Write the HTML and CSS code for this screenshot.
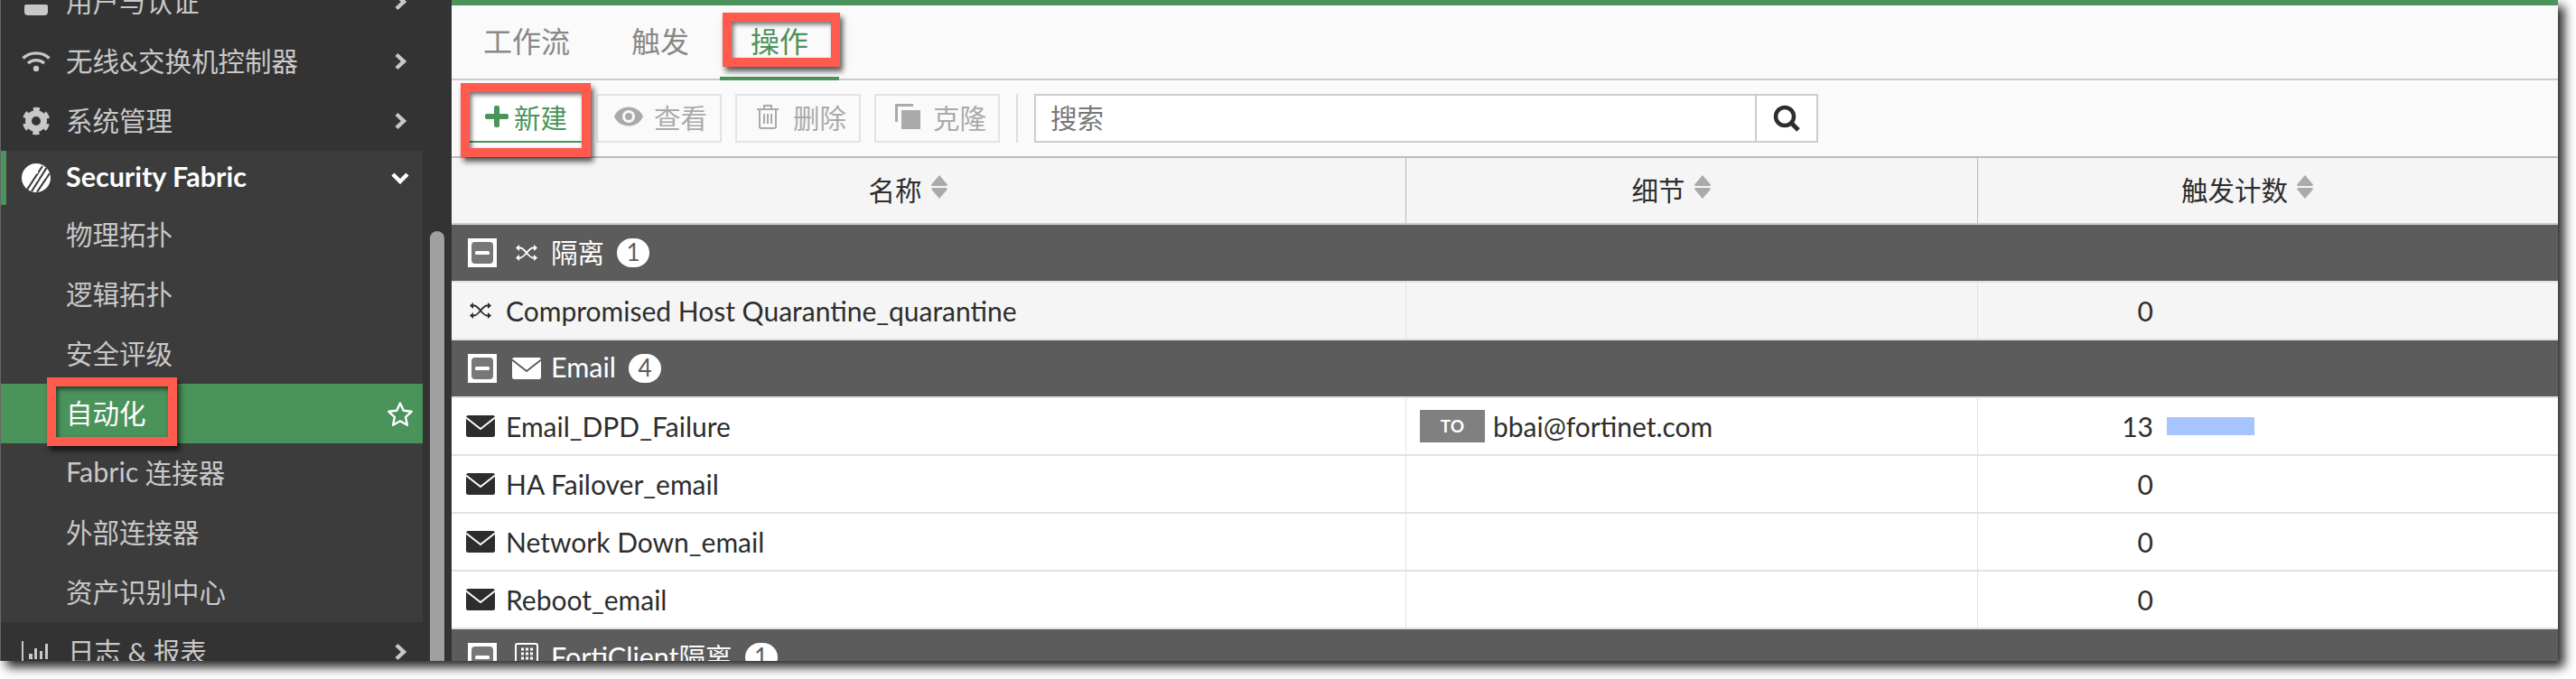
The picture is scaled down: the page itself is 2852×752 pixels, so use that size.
FILE: index.html
```html
<!DOCTYPE html>
<html lang="zh-CN">
	<head>
		<meta charset="UTF-8" />
		<title>Automation</title>
		<link rel="stylesheet" href="styles.css">
	</head>
	<body>
		<svg class="sprite">
			<symbol id="chev-right" viewBox="0 0 14 20"><path d="M3 2.500 11 10 3 17.500" fill="none" stroke="currentColor" stroke-width="4.400"/></symbol>
			<symbol id="mail" viewBox="0 0 32 24"><rect width="32" height="24" rx="2.500" fill="currentColor"/><path class="mail-v" d="M0 2.500 16 15 32 2.500" fill="none" stroke-width="1.800"/></symbol>
			<symbol id="shuffle" viewBox="0 0 24 18" fill="none" stroke="currentColor" stroke-width="1.800"><path d="M2 3.500H5C10 3.500 14 14.500 19 14.500H22M2 14.500H5C10 14.500 14 3.500 19 3.500H22"/><path d="M20 0 24 3.500 20 7ZM20 11 24 14.500 20 18ZM4 0 0 3.500 4 7ZM4 11 0 14.500 4 18Z" fill="currentColor" stroke="none"/></symbol>
			<symbol id="minus-box" viewBox="0 0 32 32"><rect width="32" height="32" fill="#fff"/><rect x="4" y="4" width="24" height="24" rx="4" fill="#777"/><rect x="8" y="14" width="16" height="4" rx="1.500" fill="#fff"/></symbol>
			<symbol id="sort" viewBox="0 0 18 26"><path d="M9 0 18 10.500Q18 12 16 12H2Q0 12 0 10.500ZM2 14H16Q18 14 18 15.500L9 26 0 15.500Q0 14 2 14Z" fill="currentColor"/></symbol>
		</svg>
		<div class="frame">
			<nav class="sidebar">
				<div class="menu">
					<div class="item">
						<svg class="item-icon" viewBox="0 0 32 32"><path d="M3 13V7Q3 5 5 5H27Q29 5 29 7V13Q29 17 25 17H7Q3 17 3 13Z" fill="currentColor" transform="translate(0 14)"/></svg>
						<span>用户与认证</span>
						<svg class="chev"><use href="#chev-right"/></svg>
					</div>
					<div class="item">
						<svg class="item-icon" viewBox="0 0 32 24" fill="none" stroke="currentColor" stroke-width="3.400"><path d="M1.500 8.500C9 1 23 1 30.500 8.500M7 14C12 9.500 20 9.500 25 14"/><circle cx="16" cy="20" r="3.200" fill="currentColor" stroke="none"/></svg>
						<span>无线&amp;交换机控制器</span>
						<svg class="chev"><use href="#chev-right"/></svg>
					</div>
					<div class="item">
						<svg class="item-icon" viewBox="0 0 32 32" fill="none" stroke="currentColor"><circle cx="16" cy="16" r="8.500" stroke-width="7"/><circle cx="16" cy="16" r="13" stroke-width="4.500" stroke-dasharray="7 6.610" stroke-dashoffset="-3.300"/></svg>
						<span>系统管理</span>
						<svg class="chev"><use href="#chev-right"/></svg>
					</div>
					<div class="section">
						<div class="item item-head">
							<svg class="item-icon" viewBox="0 0 32 32"><circle cx="16" cy="16" r="16" fill="#fff"/><path d="M23 3 6 29M27.500 5 11 31M31 11 17 31.500" fill="none" stroke="#3c3c3c" stroke-width="2.200"/><circle cx="17" cy="10" r="1.300" fill="#fff"/><circle cx="17" cy="18" r="1.300" fill="#fff"/><circle cx="26" cy="15" r="1.300" fill="#fff"/></svg>
							<span>Security Fabric</span>
							<svg class="chev-down" viewBox="0 0 20 14"><path d="M2 3 10 11 18 3" fill="none" stroke="currentColor" stroke-width="4.400"/></svg>
						</div>
						<div class="item">物理拓扑</div>
						<div class="item">逻辑拓扑</div>
						<div class="item">安全评级</div>
						<div class="item item-active">
							<span>自动化</span>
							<svg class="star" viewBox="0 0 30 29"><path d="M15 2.500 18.800 10.700 27.700 11.800 21.100 17.900 22.900 26.700 15 22.300 7.100 26.700 8.900 17.900 2.300 11.800 11.200 10.700Z" fill="none" stroke="currentColor" stroke-width="2.400" stroke-linejoin="round"/></svg>
						</div>
						<div class="item"><span class="latin">Fabric</span>&nbsp;连接器</div>
						<div class="item">外部连接器</div>
						<div class="item">资产识别中心</div>
					</div>
					<div class="item">
						<svg class="item-icon" viewBox="0 0 32 24" fill="currentColor"><path d="M0 0H2V22H32V24H0Z"/><rect x="8" y="14" width="4" height="6"/><rect x="14" y="8" width="3" height="12"/><rect x="20" y="11" width="3" height="9"/><rect x="26" y="3" width="3" height="17"/></svg>
						<span class="logs">日志 &amp; 报表</span>
						<svg class="chev"><use href="#chev-right"/></svg>
					</div>
				</div>
				<div class="scroll-thumb"></div>
			</nav>

			<main class="content">
				<div class="tabs">
					<div class="tab">工作流</div>
					<div class="tab">触发</div>
					<div class="tab tab-active">操作</div>
				</div>

				<div class="toolbar">
					<button class="btn btn-new">
						<svg class="btn-plus" viewBox="0 0 26 24"><path d="M10 2Q10 0 12 0H14Q16 0 16 2V9H24Q26 9 26 11V13Q26 15 24 15H16V22Q16 24 14 24H12Q10 24 10 22V15H2Q0 15 0 13V11Q0 9 2 9H10Z" fill="currentColor"/></svg>
						新建
					</button>
					<button class="btn">
						<svg class="btn-eye" viewBox="0 0 32 22"><path d="M0 11C6 -3 26 -3 32 11 26 25 6 25 0 11Z" fill="currentColor"/><circle cx="16" cy="11" r="7" fill="#fafafa"/><circle cx="16" cy="11" r="4" fill="currentColor"/></svg>
						查看
					</button>
					<button class="btn">
						<svg class="btn-trash" viewBox="0 0 24 28" fill="none" stroke="currentColor" stroke-width="2"><path d="M0 6H24M8 6V2H16V6M3 6V25Q3 27 5 27H19Q21 27 21 25V6M8 11V22M12 11V22M16 11V22"/></svg>
						删除
					</button>
					<button class="btn">
						<svg class="btn-clone" viewBox="0 0 28 28" fill="currentColor"><path d="M0 0H20V3H3V20H0Z"/><rect x="7" y="7" width="21" height="21"/></svg>
						克隆
					</button>
					<div class="tool-sep"></div>
					<div class="search">
						<div class="search-input">搜索</div>
						<div class="search-btn">
							<svg viewBox="0 0 30 30" fill="none" stroke="currentColor"><circle cx="13" cy="13" r="10" stroke-width="4.500"/><path d="M20 20 28 28" stroke-width="5"/></svg>
						</div>
					</div>
				</div>

				<div class="row head">
					<div class="cell">名称<svg class="sort"><use href="#sort"/></svg></div>
					<div class="cell">细节<svg class="sort"><use href="#sort"/></svg></div>
					<div class="cell">触发计数<svg class="sort"><use href="#sort"/></svg></div>
				</div>

				<div class="group">
					<svg class="toggle"><use href="#minus-box"/></svg>
					<span class="group-icon"><svg class="ico-shuffle"><use href="#shuffle"/></svg></span>
					<span class="group-name">隔离</span>
					<span class="badge">1</span>
				</div>
				<div class="row row-alt">
					<div class="cell name"><span class="name-icon"><svg class="ico-shuffle"><use href="#shuffle"/></svg></span>Compromised Host Quarantine_quarantine</div>
					<div class="cell"></div>
					<div class="cell count">0</div>
				</div>

				<div class="group">
					<svg class="toggle"><use href="#minus-box"/></svg>
					<span class="group-icon"><svg class="ico-mail"><use href="#mail"/></svg></span>
					<span class="group-name latin">Email</span>
					<span class="badge">4</span>
				</div>
				<div class="row">
					<div class="cell name"><span class="name-icon"><svg class="ico-mail"><use href="#mail"/></svg></span>Email_DPD_Failure</div>
					<div class="cell detail"><span class="to">TO</span>bbai@fortinet.com</div>
					<div class="cell count">13<span class="bar" style="width: 97px"></span></div>
				</div>
				<div class="row">
					<div class="cell name"><span class="name-icon"><svg class="ico-mail"><use href="#mail"/></svg></span>HA Failover_email</div>
					<div class="cell"></div>
					<div class="cell count">0</div>
				</div>
				<div class="row">
					<div class="cell name"><span class="name-icon"><svg class="ico-mail"><use href="#mail"/></svg></span>Network Down_email</div>
					<div class="cell"></div>
					<div class="cell count">0</div>
				</div>
				<div class="row">
					<div class="cell name"><span class="name-icon"><svg class="ico-mail"><use href="#mail"/></svg></span>Reboot_email</div>
					<div class="cell"></div>
					<div class="cell count">0</div>
				</div>

				<div class="group">
					<svg class="toggle"><use href="#minus-box"/></svg>
					<span class="group-icon">
						<svg class="ico-client" viewBox="0 0 28 32" fill="none" stroke="currentColor" stroke-width="2"><path d="M2 31V3Q2 1 4 1H24Q26 1 26 3V31Z"/><path d="M8 7H11M13 7H16M18 7H21M8 12H11M13 12H16M18 12H21M8 17H11M13 17H16M18 17H21" stroke-width="3"/></svg>
					</span>
					<span class="group-name"><span class="latin">FortiClient</span>隔离</span>
					<span class="badge">1</span>
				</div>
			</main>

			<div class="callout callout-menu"></div>
			<div class="callout callout-tab"></div>
			<div class="callout callout-new"></div>
		</div>
	</body>
</html>
```

FILE: styles.css
```css
* {
	box-sizing: border-box;
}
html, body {
	height: 100%;
}
body {
	margin: 0;
	background-color: #fff;
	overflow: hidden;
	font-family: Lato, "Noto Sans CJK SC", sans-serif;
	font-size: 29.5px;
	color: #2d2d2d;
}
button {
	font: inherit;
}
.sprite {
	display: none;
}
.latin {
	font-size: 30.5px;
}
.frame {
	position: relative;
	display: flex;
	width: 2832px;
	height: 732px;
	overflow: visible;
	box-shadow: 7px 7px 11px rgb(40, 40, 40);
}

/* sidebar */
.sidebar {
	position: relative;
	flex: 0 0 500px;
	height: 732px;
	overflow: hidden;
	background-color: #333;
	border-left: 1px solid #666;
	color: #c8c8c8;
}
.menu {
	width: 467px;
	margin-top: -31px;
}
.item {
	display: flex;
	align-items: center;
	height: 66px;
	padding: 0 0 5px 72px;
	position: relative;
}
.item > span {
	flex: 1;
}
.item > .latin {
	flex: none;
}
.item-icon {
	position: absolute;
	left: 23px;
	top: 17px;
	width: 32px;
	height: 32px;
}
.chev {
	width: 14px;
	height: 20px;
	margin: 5px 18px 0 0;
}
.section {
	background-color: #3c3c3c;
}
.item-head {
	height: 60px;
	color: #fff;
	font-size: 30.5px;
	font-weight: bold;
}
.item-head::before {
	content: "";
	position: absolute;
	left: -1px;
	top: 0;
	width: 7px;
	height: 60px;
	background-color: #4a935a;
}
.item-head .item-icon {
	top: 14px;
}
.chev-down {
	width: 20px;
	height: 14px;
	margin: 5px 15px 0 0;
}
.item-active {
	background-color: #4a935a;
	color: #fff;
}
.star {
	width: 30px;
	height: 29px;
	margin: 5px 10px 0 0;
}
.logs {
	padding-left: 2px;
}
.scroll-thumb {
	position: absolute;
	left: 475px;
	top: 256px;
	width: 16px;
	height: 480px;
	border-radius: 8px 8px 0 0;
	background-color: #a0a0a0;
}

/* content */
.content {
	flex: 1;
	height: 732px;
	overflow: hidden;
	background-color: #fafafa;
	border-top: 6px solid #4a935a;
}
.tabs {
	display: flex;
	height: 83px;
	padding-left: 1px;
	border-bottom: 2px solid #ccc;
	font-size: 32px;
	color: #888;
}
.tab {
	height: 83px;
	padding: 17px 34px 0;
	line-height: 46px;
}
.tab-active {
	color: #4a935a;
	border-bottom: 4px solid #4a935a;
}
.toolbar {
	display: flex;
	height: 86px;
	padding: 15px 0 0 16px;
	border-bottom: 2px solid #bbb;
	color: #aaa;
}
.btn {
	display: flex;
	align-items: center;
	gap: 12px;
	width: 139px;
	height: 54px;
	margin-right: 15px;
	padding: 0 0 4px 18px;
	background: none;
	border: 2px solid #e3e3e3;
	color: #aaa;
}
.btn-new {
	width: 129px;
	padding-left: 19px;
	gap: 6px;
	background-color: #fff;
	border-color: #fff;
	border-bottom-color: #4a935a;
	color: #4a935a;
}
.btn-plus {
	width: 26px;
	height: 24px;
}
.btn-eye {
	width: 32px;
	height: 22px;
}
.btn-trash {
	width: 24px;
	height: 28px;
	margin: 0 4px;
}
.btn-clone {
	width: 28px;
	height: 28px;
	margin-right: 2px;
	margin-left: 3px;
}
.tool-sep {
	width: 2px;
	height: 54px;
	margin: 0 18px 0 3px;
	background-color: #ddd;
}
.search {
	display: flex;
	width: 868px;
	height: 54px;
	background-color: #fff;
	border: 2px solid #ccc;
}
.search-input {
	flex: 1;
	padding-left: 16px;
	line-height: 50px;
	color: #777;
}
.search-btn {
	display: flex;
	align-items: center;
	justify-content: center;
	width: 68px;
	border-left: 2px solid #ccc;
	color: #2d2d2d;
}
.search-btn svg {
	width: 30px;
	height: 30px;
}

/* table */
.row {
	--mail-v: #fff;
	display: grid;
	grid-template-columns: 1056px 633px 1fr;
	height: 64px;
	background-color: #fff;
	border-bottom: 2px solid #e2e2e2;
	font-size: 30px;
}
.row-alt {
	background-color: #f5f5f5;
}
.head {
	height: 74px;
	background-color: #f5f5f5;
	border-bottom: 2px solid #ccc;
	font-size: 29.5px;
}
.cell {
	display: flex;
	align-items: center;
	min-width: 0;
	border-left: 1px solid #e2e2e2;
}
.cell:first-child {
	border-left: none;
}
.head .cell {
	justify-content: center;
	padding: 0 46px 5px 0;
	border-left-color: #bbb;
}
.sort {
	width: 18px;
	height: 26px;
	margin: -3px 0 0 10px;
	color: #aaa;
}
.mail-v {
	stroke: var(--mail-v);
}
.group {
	--mail-v: #5c5c5c;
	display: flex;
	align-items: center;
	height: 64px;
	padding-left: 18px;
	background-color: #5c5c5c;
	border-bottom: 2px solid #e2e2e2;
	color: #fff;
}
.toggle {
	width: 32px;
	height: 32px;
}
.group-icon {
	display: flex;
	justify-content: center;
	width: 32px;
	margin: 0 11px 0 17px;
}
.group-name {
	padding-bottom: 5px;
}
.badge {
	width: 36px;
	height: 32px;
	margin-left: 14px;
	border-radius: 16px;
	background-color: #fff;
	color: #5c5c5c;
	font-size: 26px;
	line-height: 31px;
	text-align: center;
}
.ico-shuffle {
	width: 24px;
	height: 18px;
}
.ico-mail {
	width: 32px;
	height: 24px;
}
.ico-client {
	width: 28px;
	height: 32px;
}
.name {
	padding-left: 16px;
}
.name-icon {
	display: flex;
	justify-content: center;
	width: 32px;
	margin-right: 12px;
}
.detail {
	padding-left: 15px;
}
.to {
	width: 72px;
	height: 36px;
	margin-right: 9px;
	background-color: #808080;
	color: #fff;
	font-size: 19px;
	font-weight: bold;
	line-height: 36px;
	text-align: center;
}
.count {
	display: grid;
	grid-template-columns: 44px auto;
	justify-content: start;
	justify-items: end;
	padding-left: 150px;
}
.bar {
	justify-self: start;
	height: 20px;
	margin-left: 15px;
	background-color: #a6c4ff;
}

/* annotation boxes laid over the screenshot */
.callout {
	position: absolute;
	border: 10px solid #fe5a4d;
	box-shadow: 3px 5px 6px rgba(0, 0, 0, 0.65), inset 2px 3px 5px rgba(0, 0, 0, 0.55);
}
.callout-menu {
	left: 52px;
	top: 418px;
	width: 144px;
	height: 76px;
}
.callout-tab {
	left: 800px;
	top: 14px;
	width: 130px;
	height: 60px;
}
.callout-new {
	left: 510px;
	top: 92px;
	width: 144px;
	height: 82px;
}
```
